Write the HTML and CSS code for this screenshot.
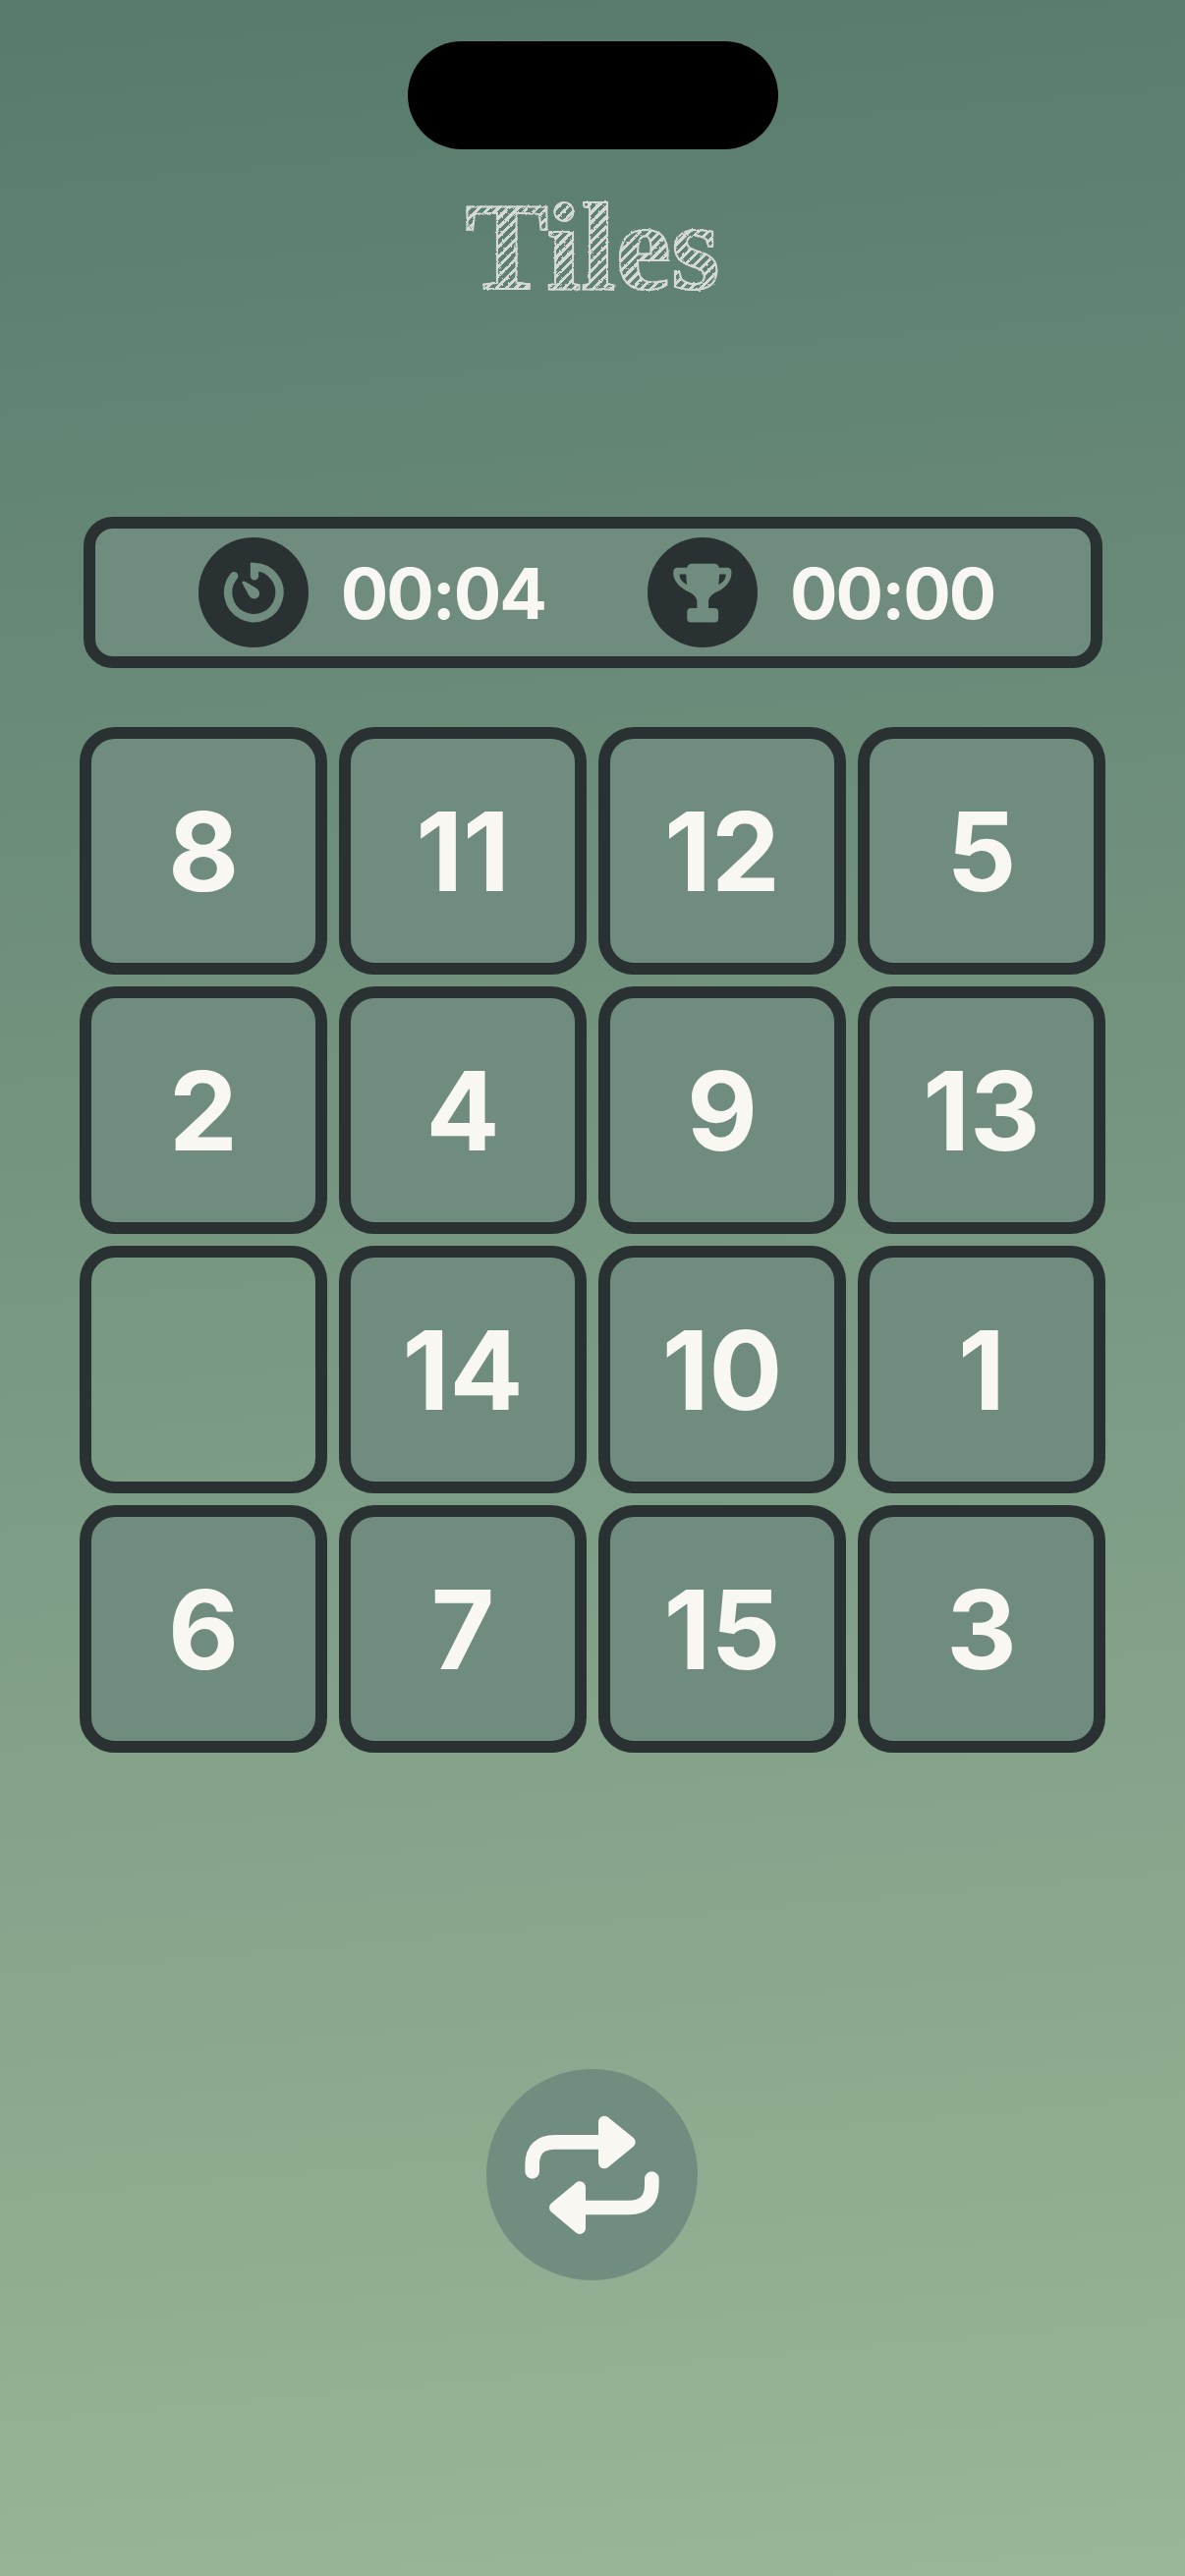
FILE: index.html
```html
<!DOCTYPE html>
<html lang="en">
<head>
    <meta charset="UTF-8">
    <meta name="viewport" content="width=device-width, initial-scale=1.0">
    <title>Tiles</title>
    <link rel="stylesheet" href="styles.css">
</head>
<body>
    <div class="island"></div>
    <svg class="filters" width="0" height="0">
        <filter id="rough">
            <feTurbulence type="fractalNoise" baseFrequency="0.35" numOctaves="2" seed="4"/>
            <feDisplacementMap in="SourceGraphic" scale="2.5"/>
        </filter>
    </svg>
    <h1 class="title">Tiles</h1>

    <div class="stats">
        <div class="stat">
            <div class="statIcon">
                <svg viewBox="37 38 334 334" width="112" height="112">
                    <path class="ring" d="M207 155 V127 A78 78 0 1 1 145 155"/>
                    <path class="solid" d="M169 175 Q172 169 179 172 L214 193 Q226 202 221 215 Q214 228 199 223 Q192 220 188 210 Z"/>
                </svg>
            </div>
            <span>00:04</span>
        </div>
        <div class="stat">
            <div class="statIcon">
                <svg viewBox="30 38 334 334" width="112" height="112">
                    <path class="solid" fill-rule="evenodd" d="M150 130 Q152 118 165 118 H232 Q245 118 247 130 H272 Q285 130 285 145 Q285 170 262 190 Q250 200 235 206 Q215 218 215 232 V253 H233 Q245 253 245 265 V285 Q245 296 233 296 H162 Q150 296 150 285 V265 Q150 253 162 253 H180 V232 Q180 218 160 206 Q145 200 133 190 Q108 170 108 145 Q108 130 122 130 Z M127 150 H147 Q147 165 150 182 Q127 170 127 150 Z M268 150 H248 Q248 165 245 182 Q268 170 268 150 Z"/>
                </svg>
            </div>
            <span>00:00</span>
        </div>
    </div>

    <div class="board">
        <div class="tile">8</div>
        <div class="tile">11</div>
        <div class="tile">12</div>
        <div class="tile">5</div>
        <div class="tile">2</div>
        <div class="tile">4</div>
        <div class="tile">9</div>
        <div class="tile">13</div>
        <div class="tile empty"></div>
        <div class="tile">14</div>
        <div class="tile">10</div>
        <div class="tile">1</div>
        <div class="tile">6</div>
        <div class="tile">7</div>
        <div class="tile">15</div>
        <div class="tile">3</div>
    </div>

    <button class="shuffle">
        <svg viewBox="45 47 645 645" width="215" height="215">
            <path class="line" d="M185 360 V340 Q185 270 255 270 H400"/>
            <path class="head" d="M405 208 L482 270 L405 333 Z"/>
            <path class="line" d="M550 382 V400 Q550 470 480 470 H340"/>
            <path class="head" d="M330 408 L255 470 L330 533 Z"/>
        </svg>
    </button>
</body>
</html>
```

FILE: styles.css
```css
body{
    margin: 0;
    width: 1206px;
    height: 2622px;
    overflow: hidden;
    display: flex;
    flex-direction: column;
    align-items: center;
    padding-top: 42px;
    box-sizing: border-box;
    background: linear-gradient(175deg, #577a6c 0%, #9ab698 100%);
    font-family: Inter, "Liberation Sans", sans-serif;
    color: #f8f7f2;
}
.island{
    width: 377px;
    height: 110px;
    border-radius: 55px;
    background-color: #000;
}
.filters{
    position: absolute;
}
.title{
    margin: 40px 0 0;
    height: 114px;
    font-family: "Liberation Serif", serif;
    font-size: 127px;
    line-height: 119px;
    font-weight: 700;
    color: transparent;
    -webkit-text-stroke: 2px #d6d9d6;
    background: repeating-linear-gradient(-45deg, #d6d9d6 0 3px, transparent 3px 7px);
    -webkit-background-clip: text;
    background-clip: text;
    filter: url(#rough);
}
.stats{
    margin-top: 220px;
    width: 1037px;
    height: 154px;
    box-sizing: border-box;
    border: 12px solid #293133;
    border-radius: 30px;
    padding-left: 8px;
    background-color: #6f8c7e;
    display: flex;
    justify-content: center;
    gap: 104px;
}
.stat{
    display: flex;
    align-items: center;
    gap: 33px;
    font-size: 72px;
    font-weight: 650;
    letter-spacing: -2px;
}
.statIcon{
    width: 112px;
    height: 112px;
    border-radius: 50%;
    background-color: #293133;
}
.statIcon svg{
    display: block;
}
.ring{
    fill: none;
    stroke: #6f8c7e;
    stroke-width: 25;
    stroke-linecap: round;
}
.solid{
    fill: #6f8c7e;
}
.board{
    margin-top: 60px;
    display: grid;
    grid-template-columns: repeat(4, 252px);
    grid-auto-rows: 252px;
    gap: 12px;
}
.tile{
    box-sizing: border-box;
    border: 12px solid #293133;
    border-radius: 36px;
    background-color: #6f8c7e;
    display: flex;
    align-items: center;
    justify-content: center;
    font-size: 111px;
    font-weight: 700;
}
.tile.empty{
    background-color: transparent;
}
.shuffle{
    margin-top: 322px;
    margin-right: 1px;
    width: 215px;
    height: 215px;
    padding: 0;
    border: 0;
    border-radius: 50%;
    background-color: #708d80;
}
.shuffle svg{
    display: block;
}
.line{
    fill: none;
    stroke: #f8f7f2;
    stroke-width: 44;
    stroke-linecap: round;
}
.head{
    fill: #f8f7f2;
    stroke: #f8f7f2;
    stroke-width: 36;
    stroke-linejoin: round;
}
```
